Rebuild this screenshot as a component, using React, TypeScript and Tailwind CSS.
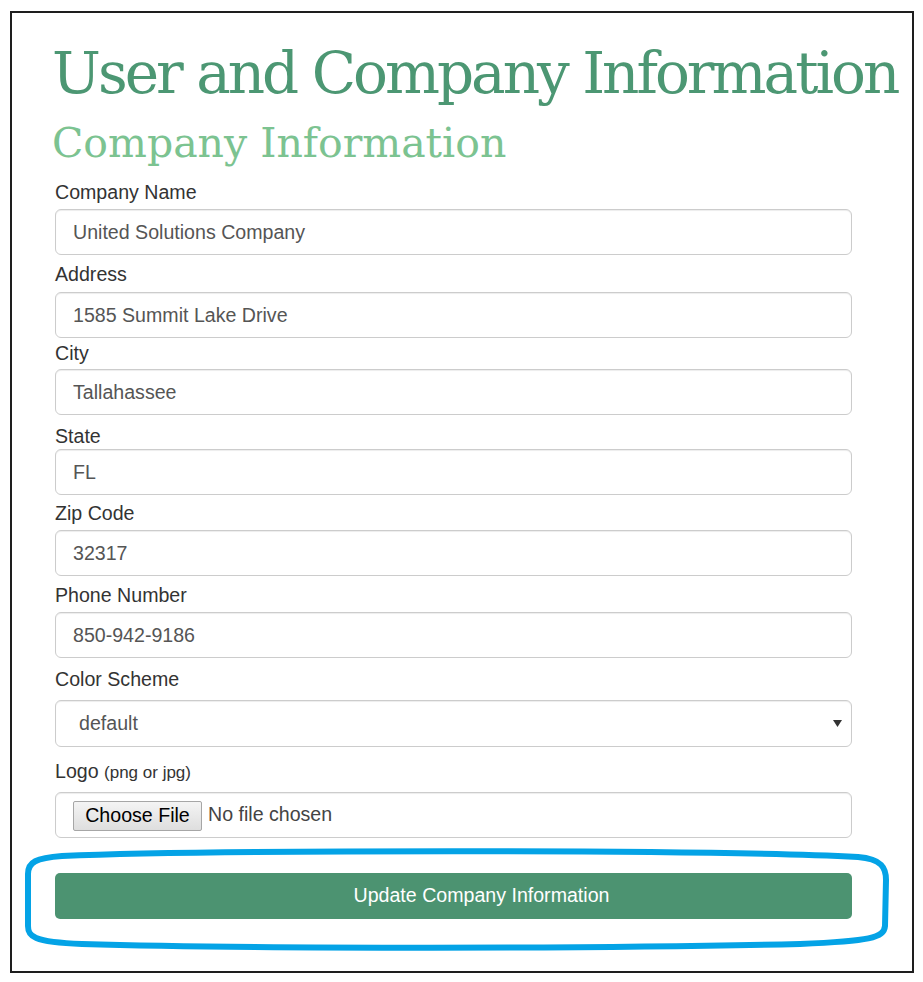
const fields = [
  { label: 'Company Name', value: 'United Solutions Company', mt: 'mt-[13px]', mb: 'mb-[5px]' },
  { label: 'Address', value: '1585 Summit Lake Drive', mt: 'mt-[7px]', mb: 'mb-[6px]' },
  { label: 'City', value: 'Tallahassee', mt: 'mt-[3px]', mb: 'mb-[4px]' },
  { label: 'State', value: 'FL', mt: 'mt-[9px]', mb: 'mb-[1px]' },
  { label: 'Zip Code', value: '32317', mt: 'mt-[6px]', mb: 'mb-[5px]' },
  { label: 'Phone Number', value: '850-942-9186', mt: 'mt-[7px]', mb: 'mb-[5px]' },
];

const sans = "font-['Liberation_Sans',Arial,sans-serif]";
const inputBox =
  'block w-full h-[46px] rounded-[6px] border border-[#cccccc] bg-white shadow-[inset_0_1px_1px_rgba(0,0,0,0.075)] text-[19.6px] text-[#555555]';

function Highlight() {
  // hand-drawn blue ring around the submit button
  return (
    <svg
      className="absolute left-0 top-0 pointer-events-none"
      width="923"
      height="982"
      viewBox="0 0 923 982"
    >
      <path
        d="M 62 856 C 200 850, 700 849, 858 857 C 882 859, 886 868, 886 880 L 885 926 C 884 938, 870 941, 800 944 C 600 949, 250 949, 82 944 C 32 942, 28 936, 28 926 L 28 874 C 28 862, 36 858, 62 856 Z"
        fill="none"
        stroke="#04a3e6"
        strokeWidth="6"
      />
    </svg>
  );
}

export default function App() {
  return (
    <div className={`relative w-[923px] h-[982px] bg-white pt-[11px] pl-[10px] ${sans}`}>
      <div className="w-[904px] h-[962px] border-2 border-[#1e1e1e] pl-[43px] pt-[27px]">
        <h1 className="font-['DejaVu_Serif',serif] text-[58px] leading-[66px] text-[#4c9773] whitespace-nowrap -ml-[3px] tracking-[-3px]">
          User and Company Information
        </h1>
        <h2 className="mt-[13px] font-['DejaVu_Serif',serif] text-[41px] leading-[48px] text-[#7cc391] whitespace-nowrap -ml-[3px]">
          Company Information
        </h2>

        <form className="w-[797px]">
          {fields.map((f) => (
            <div key={f.label}>
              <label className={`block h-[24px] leading-[24px] text-[19.6px] text-[#333333] ${f.mt} ${f.mb}`}>
                {f.label}
              </label>
              <input className={`${inputBox} px-[17px] ${sans}`} defaultValue={f.value} readOnly />
            </div>
          ))}

          <label className="block mt-[9px] mb-[9px] h-[24px] leading-[24px] text-[19.6px] text-[#333333]">
            Color Scheme
          </label>
          <div className="relative">
            <select
              className={`${inputBox} h-[47px] appearance-none pl-[23px] ${sans}`}
              defaultValue="default"
            >
              <option value="default">default</option>
            </select>
            <svg
              className="absolute right-[10px] top-[20px] pointer-events-none"
              width="9"
              height="7"
              viewBox="0 0 9 7"
            >
              <path d="M0 0 L9 0 L4.5 7 Z" fill="#333333" />
            </svg>
          </div>

          <label className="block mt-[12px] mb-[9px] h-[24px] leading-[24px] text-[19.6px] text-[#333333]">
            Logo <span className="text-[17px]">(png or jpg)</span>
          </label>
          <div className={`${inputBox} flex items-center pl-[17px]`}>
            <button
              type="button"
              className="mt-[2px] h-[30px] w-[129px] rounded-[2px] border border-[#a6a6a6] bg-gradient-to-b from-[#f4f4f4] to-[#dedede] text-[19.6px] text-black leading-none"
            >
              Choose File
            </button>
            <span className="ml-[6px] text-[19.6px] text-[#444444]">No file chosen</span>
          </div>

          <button
            type="button"
            className="mt-[35px] block w-full h-[46px] rounded-[5px] bg-[#4c9371] pl-[56px] text-white text-[19.6px]"
          >
            Update Company Information
          </button>
        </form>
      </div>
      <Highlight />
    </div>
  );
}
